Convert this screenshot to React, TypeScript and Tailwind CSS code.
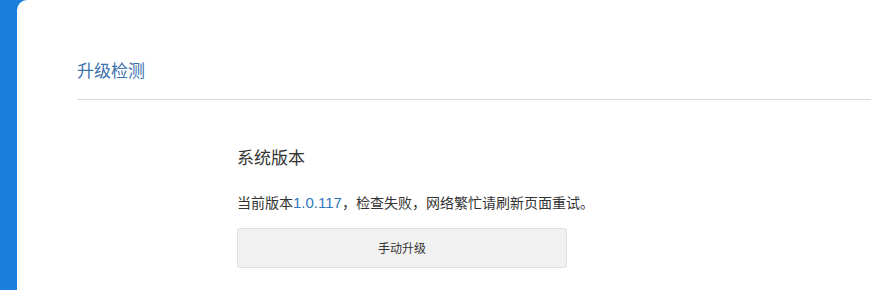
import React from 'react';

const App: React.FC = () => {
  return (
    <div
      className="flex h-[290px] w-[871px] overflow-hidden bg-[#1a7fdc]"
      style={{ fontFamily: '"Noto Sans CJK SC", "Microsoft YaHei", "Liberation Sans", sans-serif' }}
    >
      <div className="ml-[17px] flex-1 rounded-tl-[10px] bg-white pl-[60px] pt-[56px]">
        <div className="border-b border-[#dcdcdc] pb-[15px]">
          <h2 className="text-[17px] leading-[28px] text-[#3d73ad]">升级检测</h2>
        </div>
        <div className="pl-[160px] pt-[44px]">
          <div className="text-[17px] leading-[26px] text-[#333]">系统版本</div>
          <p className="mt-[22px] text-[14px] leading-[20px] text-[#333]">
            当前版本<span className="font-['Liberation_Sans'] text-[15px] text-[#2f77c0]">1.0.117</span>，检查失败，网络繁忙请刷新页面重试。
          </p>
          <button className="mt-[15px] flex h-[40px] w-[330px] items-center justify-center rounded-[3px] border border-[#e0e0e0] bg-[#f1f1f1] text-[12px] text-[#333]">
            手动升级
          </button>
        </div>
      </div>
    </div>
  );
};

export default App;
